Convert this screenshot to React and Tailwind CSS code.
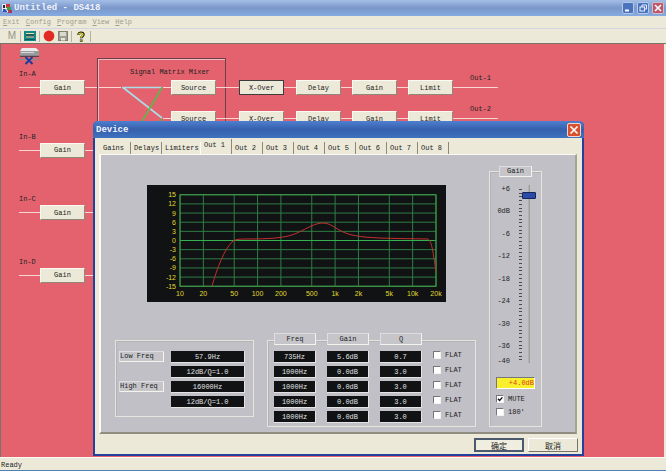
import { useState } from 'react';

const MENU = ['Exit', 'Config', 'Program', 'View', 'Help'];
const INPUTS = ['In-A', 'In-B', 'In-C', 'In-D'];
const OUTPUTS = ['Out-1', 'Out-2'];
const TABS = ['Gains', 'Delays', 'Limiters', 'Out 1', 'Out 2', 'Out 3', 'Out 4', 'Out 5', 'Out 6', 'Out 7', 'Out 8'];

const FILTERS = [
  { label: 'Low Freq', freq: '57.9Hz', slope: '12dB/Q=1.0' },
  { label: 'High Freq', freq: '16000Hz', slope: '12dB/Q=1.0' },
];

const BANDS = [
  { freq: '735Hz', gain: '5.6dB', q: '0.7' },
  { freq: '1000Hz', gain: '0.0dB', q: '3.0' },
  { freq: '1000Hz', gain: '0.0dB', q: '3.0' },
  { freq: '1000Hz', gain: '0.0dB', q: '3.0' },
  { freq: '1000Hz', gain: '0.0dB', q: '3.0' },
];

const SCALE = [
  { label: '+6', grow: 'flex-6' },
  { label: '0dB', grow: 'flex-6' },
  { label: '-6', grow: 'flex-6' },
  { label: '-12', grow: 'flex-6' },
  { label: '-18', grow: 'flex-6' },
  { label: '-24', grow: 'flex-6' },
  { label: '-30', grow: 'flex-6' },
  { label: '-36', grow: 'flex-4' },
  { label: '-40', grow: 'h-[8px]' },
];

const FREQS = [
  [10, '10'], [20, '20'], [50, '50'], [100, '100'], [200, '200'], [500, '500'],
  [1000, '1k'], [2000, '2k'], [5000, '5k'], [10000, '10k'], [20000, '20k'],
];
const LEVELS = [15, 12, 9, 6, 3, 0, -3, -6, -9, -12, -15];

/* ---------- Main window ---------- */

const AppIcon = () => (
  <svg viewBox="0 0 10 10" className="size-[10px] shrink-0" aria-hidden="true">
    <rect x="0" y="1" width="5" height="7" fill="#e8e8f0" />
    <rect x="1" y="2" width="2" height="3" fill="#2a2a35" />
    <path d="M4 1h4v4H4z" fill="#c83838" />
    <path d="M5 4h4v3H5z" fill="#3aa04a" />
    <path d="M1 6h4v3H1z" fill="#3550b0" />
    <path d="M6 7h4v3H6z" fill="#a83a58" />
    <path d="M3 5l3 4" stroke="#fff" />
  </svg>
);

const TitleBar = () => (
  <header className="flex h-4 items-center gap-[2px] bg-linear-to-b from-[#a3bfe6] via-[#7b97ca] to-[#84abe0] px-[2px]">
    <AppIcon />
    <h1 className="grow text-[9px] leading-[10px] font-bold text-[#eef2fb]">Untitled - DS418</h1>
    <div className="flex gap-[3px]">
      <button aria-label="Minimize" className="size-3 rounded-[2px] border border-[#b5c8ec] bg-[#4a72bd]">
        <svg viewBox="0 0 10 10" className="size-full"><path d="M2 7.5h4" stroke="#fff" strokeWidth="2" /></svg>
      </button>
      <button aria-label="Restore" className="size-3 rounded-[2px] border border-[#b5c8ec] bg-[#4a72bd]">
        <svg viewBox="0 0 10 10" className="size-full" fill="none" stroke="#e8effc">
          <path d="M4 4V2h4.5v4H7" />
          <rect x="2" y="4" width="4.5" height="4" />
        </svg>
      </button>
      <button aria-label="Close" className="size-3 rounded-[2px] border border-[#d9b9c8] bg-[#b9586a]">
        <svg viewBox="0 0 10 10" className="size-full"><path d="M2 2l6 6M8 2l-6 6" stroke="#fff" strokeWidth="1.6" /></svg>
      </button>
    </div>
  </header>
);

const MenuBar = () => (
  <nav className="flex h-[13px] items-center gap-[6px] border-b border-[#d3d5e2] px-[3px] text-[#a09e8d]">
    {MENU.map(item => (
      <button key={item}>
        <span className="underline">{item[0]}</span>{item.slice(1)}
      </button>
    ))}
  </nav>
);

const Separator = () => <div className="h-[11px] w-px bg-[#b5b3a5]" />;

const ToolBar = () => (
  <div className="flex h-[15px] items-center gap-[3px] border-b border-[#77756a] pl-[7px]">
    <button className="w-[10px] font-[Liberation_Sans] text-[10px] leading-[10px] text-[#94938a]">M</button>
    <Separator />
    <button aria-label="Monitor">
      <svg viewBox="0 0 12 10" className="h-[10px] w-3">
        <rect width="12" height="10" fill="#12888a" />
        <rect x="2" y="2" width="8" height="5" fill="#1c5f60" />
        <path d="M2 2.500h8M2 6h8" stroke="#e8dfa0" />
        <path d="M1 8.5h10" stroke="#0c5d60" />
      </svg>
    </button>
    <Separator />
    <button aria-label="Record">
      <svg viewBox="0 0 12 12" className="size-3"><circle cx="6" cy="6" r="5.4" fill="#e02a22" /></svg>
    </button>
    <button aria-label="Save">
      <svg viewBox="0 0 10 10" className="size-[10px]">
        <rect x=".5" y=".5" width="9" height="9" fill="#a09f95" stroke="#807f76" />
        <rect x="2" y="1" width="6" height="4" fill="#dcdacb" />
        <rect x="3" y="7" width="4" height="2.5" fill="#e8e6d8" />
      </svg>
    </button>
    <Separator />
    <button aria-label="Help" className="mx-[2px]">
      <svg viewBox="0 0 8 11" className="h-[11px] w-2" fill="none">
        <path d="M1.6 4C1.4 1 6.600 1 6.400 3.600 6.300 5.200 4.200 5.200 4.200 7.200M4.200 8.400v2.300" stroke="#1c1c10" strokeWidth="2.600" />
        <path d="M1.700 3.700C1.800 1.700 6.100 1.700 6 3.600 5.900 5 4 5.200 4 6.800M4 8.900v1.300" stroke="#e2da2c" strokeWidth="1.300" />
      </svg>
    </button>
    <Separator />
  </div>
);

/* ---------- Signal flow diagram ---------- */

const Block = ({ children, active }) => (
  <button
    className={`h-[15px] w-[45px] shrink-0 border bg-[#ece9d8] text-[#222] ${
      active ? 'border-[#3c3c3c]' : 'border-t-[#fbfaf3] border-l-[#fbfaf3] border-r-[#8d8878] border-b-[#8d8878]'
    }`}
  >
    {children}
  </button>
);

const Wire = ({ width }) => <div className={`h-px bg-[#f8d6d2] ${width}`} />;

const DeviceIcon = () => (
  <svg viewBox="0 0 20 17" className="absolute top-[4px] left-[18px] h-[17px] w-5" aria-hidden="true">
    <path d="M0 11.5h20" stroke="#8b8b90" strokeWidth="1.4" />
    <path d="M3 0h14l3 3H1z" fill="#ececec" />
    <path d="M1 3h19v5H1z" fill="#9c9ca0" />
    <path d="M2 4.5h13" stroke="#d9d9dc" />
    <path d="M1 8.3h19" stroke="#3a3a3e" />
    <path d="M17 4.5h1.6" stroke="#4fb04f" />
    <path d="M6.5 9l7 7M13.5 9l-7 7" stroke="#1f3c9c" strokeWidth="2" />
  </svg>
);

const Diagram = () => (
  <>
    <DeviceIcon />

    <div className="absolute top-[26px] left-[18px] flex h-[213px] flex-col justify-between">
      {INPUTS.map(name => (
        <div key={name}>
          <div className="h-[10px] leading-[9px]">{name}</div>
          <div className="flex items-center">
            <Wire width="w-[21px]" />
            <Block>Gain</Block>
            <Wire width="w-[36px]" />
          </div>
        </div>
      ))}
    </div>

    {/* Mixer frame and crosspoints */}
    <div className="absolute top-[14px] left-[96px] h-[120px] w-[129px] border border-[#6b4046] shadow-[inset_1px_1px_0_#f3b9bc]">
      <div className="mt-[8px] ml-[32px] whitespace-nowrap">Signal Matrix Mixer</div>
    </div>
    <svg viewBox="0 0 48 48" className="absolute top-[40px] left-[118px] size-12" fill="none" aria-hidden="true">
      <path d="M3 3.5h40M4 3.5L43 34" stroke="#a9dde8" strokeWidth="1.6" />
      <path d="M43 3.5L18 46M43 35L30 46" stroke="#5cb848" strokeWidth="1.6" />
    </svg>

    <div className="absolute top-[36px] left-[162px] flex flex-col gap-4">
      {OUTPUTS.map((name, i) => (
        <div key={name} className="flex items-center">
          <Wire width="w-[8px]" />
          <Block>Source</Block>
          <Wire width="w-[23px]" />
          <Block active={i === 0}>X-Over</Block>
          <Wire width="w-[12px]" />
          <Block>Delay</Block>
          <Wire width="w-[11px]" />
          <Block>Gain</Block>
          <Wire width="w-[11px]" />
          <Block>Limit</Block>
          <div className="flex w-[45px] flex-col">
            <span className="-mt-[14px] h-[14px] pl-[17px]">{name}</span>
            <Wire width="w-full" />
          </div>
        </div>
      ))}
    </div>
  </>
);

/* ---------- Device dialog ---------- */

const Readout = ({ label, value }) => (
  <input
    aria-label={label}
    defaultValue={value}
    className="h-3 w-full min-w-0 border-r border-b border-[#e4e4e4] bg-[#101214] text-center text-[#e2e4e4] outline-none"
  />
);

const Check = ({ label, checked }) => (
  <label className="flex h-2 items-center gap-[4px]">
    <input
      type="checkbox"
      defaultChecked={checked}
      className="peer size-2 shrink-0 appearance-none border border-t-[#77777b] border-l-[#77777b] border-r-[#f2f2f2] border-b-[#f2f2f2] bg-white"
    />
    <svg viewBox="0 0 8 8" className="-ml-3 hidden size-2 shrink-0 peer-checked:block" fill="none" aria-hidden="true">
      <path d="M2 3.7l1.6 1.8L6.4 2.4" stroke="#111" strokeWidth="1.4" />
    </svg>
    {label}
  </label>
);

const Caption = ({ children, className = '' }) => (
  <div className={`border border-t-[#dedee0] border-l-[#dedee0] border-r-[#f4f3ec] border-b-[#f4f3ec] bg-[#c6c6ca] ${className}`}>
    {children}
  </div>
);

const ResponseChart = () => {
  const x = f => 33 + (256 * Math.log10(f / 10)) / Math.log10(2000);
  const y = db => 55.5 - db * 3.05;

  return (
    <svg viewBox="0 0 299 117" className="ml-8 h-[117px] w-[299px] bg-[#101214]" fill="none">
      {FREQS.map(([f]) => (
        <path key={f} d={`M${x(f)} ${y(15)}V${y(-15)}`} stroke="#2f7d42" />
      ))}
      {LEVELS.map(db => (
        <path key={db} d={`M33 ${y(db)}H289`} stroke={db === 0 ? '#35b050' : '#2f7d42'} />
      ))}
      <rect x="33" y={y(15)} width="256" height="91.5" stroke="#3ea04a" />
      <path
        d="M65 101C70 84 77 64 86 56C89 54 94 54 100 54C122 54 140 53 150 48C161 43 168 38 176 38C185 38 190 46 203 49.5C216 53 235 53 250 53.5L281 54C285 56 286 68 289 86"
        stroke="#c23030"
      />
      <g fill="#e0dc30" className="font-[Liberation_Sans] text-[7px]">
        {LEVELS.map(db => (
          <text key={db} x="29" y={y(db) + 2.5} textAnchor="end">{db}</text>
        ))}
        {FREQS.map(([f, label]) => (
          <text key={f} x={x(f)} y="111" textAnchor="middle">{label}</text>
        ))}
      </g>
    </svg>
  );
};

const GROUP = 'border border-[#e6e4dc] shadow-[inset_1px_1px_0_#b3b3b8]';

const FilterGroup = () => (
  <section className={`grid grid-cols-[45px_74px] gap-x-[7px] gap-y-[3px] pt-[10px] pr-[8px] pb-2 pl-[3px] ${GROUP}`}>
    {FILTERS.map(f => (
      <div key={f.label} className="contents">
        <Caption className="h-[11px] leading-[9px]">{f.label}</Caption>
        <Readout label={f.label} value={f.freq} />
        <div className="col-start-2 flex">
          <Readout label={f.label} value={f.slope} />
        </div>
      </div>
    ))}
  </section>
);

const BandGroup = () => (
  <section className={`grid grow grid-cols-[42px_42px_42px_auto] gap-x-[11px] gap-y-[3px] pr-2 pb-[3px] pl-[6px] ${GROUP}`}>
    {['Freq', 'Gain', 'Q'].map(name => (
      <Caption key={name} className="-mt-[8px] mb-[3px] h-3 text-center">{name}</Caption>
    ))}
    <div />
    {BANDS.map((b, i) => (
      <div key={i} className="contents">
        <Readout label="Freq" value={b.freq} />
        <Readout label="Gain" value={b.gain} />
        <Readout label="Q" value={b.q} />
        <Check label="FLAT" />
      </div>
    ))}
  </section>
);

const GainFader = () => {
  const [gain, setGain] = useState(4);

  return (
    <section className={`mt-[16px] w-[53px] ${GROUP}`}>
      <Caption className="mx-auto -mt-[6px] h-[11px] w-[33px] text-center leading-[9px]">Gain</Caption>

      <div className="mt-2 flex h-[180px]">
        <div className="flex w-5 flex-col text-right leading-[8px]">
          {SCALE.map(s => (
            <div key={s.label} className={s.grow}>{s.label}</div>
          ))}
        </div>
        <div className="my-[4px] ml-[9px] flex w-[3px] flex-col justify-between">
          {Array.from({ length: 47 }, (_, i) => (
            <div key={i} className="h-px bg-[#4c4c50]" />
          ))}
        </div>
        <input
          type="range"
          aria-label="Gain"
          min="-40"
          max="6"
          value={gain}
          onChange={e => setGain(Number(e.target.value))}
          className="h-[178px] w-[14px] appearance-none bg-linear-to-r from-transparent from-45% via-[#8c8c88] via-50% to-transparent to-60% [direction:rtl] [writing-mode:vertical-lr] [&::-webkit-slider-thumb]:h-[7px] [&::-webkit-slider-thumb]:w-[14px] [&::-webkit-slider-thumb]:appearance-none [&::-webkit-slider-thumb]:rounded-[1px] [&::-webkit-slider-thumb]:border [&::-webkit-slider-thumb]:border-[#15255e] [&::-webkit-slider-thumb]:bg-[#2b4ba6]"
        />
      </div>

      <output className="mx-[6px] mt-[12px] block h-[12px] border border-t-[#77777b] border-l-[#77777b] border-r-white border-b-white bg-[#f8f02c] text-right text-[#e03a1c]">
        {gain > 0 ? '+' : ''}{gain.toFixed(1)}dB
      </output>
      <div className="mt-[6px] flex flex-col gap-[5px] pb-[10px] pl-[6px]">
        <Check label="MUTE" checked />
        <Check label="180'" />
      </div>
    </section>
  );
};

const DeviceDialog = () => {
  const [tab, setTab] = useState('Out 1');

  return (
    <div role="dialog" aria-label="Device" className="absolute top-[77px] left-[92px] w-[491px] rounded-t-[5px] border-x-2 border-b-2 border-[#22409c] bg-[#ece9d8]">
      <div className="-mx-[2px] flex h-[17px] items-center justify-between rounded-t-[5px] bg-linear-to-b from-[#4f7fd0] via-[#3560ac] to-[#3f72bf] px-[3px]">
        <h2 className="text-[9px] leading-[10px] font-bold text-[#f2f5fc]">Device</h2>
        <button aria-label="Close" className="size-[14px] rounded-[2px] border border-[#f0d5cc] bg-[#d9502f]">
          <svg viewBox="0 0 12 12" className="size-full"><path d="M2.5 2.5l7 7M9.5 2.5l-7 7" stroke="#fff" strokeWidth="1.7" /></svg>
        </button>
      </div>

      <div role="tablist" className="flex h-4 items-end pl-[5px]">
        {TABS.map(name => (
          <button
            key={name}
            role="tab"
            aria-selected={name === tab}
            onClick={() => setTab(name)}
            className={`border-r pl-[3px] text-left ${name === 'Limiters' ? 'w-[39px]' : 'w-[31px]'} ${
              name === tab ? 'h-[15px] pb-[3px]' : 'h-3'
            } ${name === 'Limiters' ? 'border-white' : 'border-[#8b897c]'}`}
          >
            {name}
          </button>
        ))}
      </div>

      <div className="mr-[5px] ml-[4px] border-t border-r-2 border-b-2 border-l-2 border-t-[#fbfaf4] border-r-[#a5a394] border-b-[#8f8d80] border-l-[#fbfaf4] bg-[#c0c0c6]">
        <div className="flex gap-[13px] pr-[33px] pb-[5px] pl-[14px]">
          <div className="grow pt-[30px]">
            <ResponseChart />
            <div className="mt-[38px] flex items-start gap-[13px]">
              <FilterGroup />
              <BandGroup />
            </div>
          </div>
          <GainFader />
        </div>
      </div>

      <div className="flex justify-end gap-[4px] pt-[4px] pr-[4px] pb-[2px] font-[Noto_Sans_CJK_SC] text-[8px]">
        <button className="h-[14px] w-[50px] border-2 border-[#4c5a70] bg-[#f0eee0] leading-[9px]">确定</button>
        <button className="h-[14px] w-[50px] border border-t-white border-l-white border-r-[#77756a] border-b-[#77756a] leading-[9px]">取消</button>
      </div>
    </div>
  );
};

const App = () => (
  <div className="flex min-h-screen flex-col border-b border-[#4f7fb5] bg-[#ece9d8] font-['Liberation_Mono','Noto_Sans_CJK_SC',monospace] text-[7px] leading-[10px] text-[#222]">
    <TitleBar />
    <MenuBar />
    <ToolBar />
    <main className="relative mr-[2px] min-h-[413px] grow overflow-hidden border-l border-[#77756a] bg-[#e4626e]">
      <Diagram />
      <DeviceDialog />
    </main>
    <footer className="h-[13px] border-t border-[#fbfaf4] pt-[2px] pl-px">Ready</footer>
  </div>
);

export default App;
